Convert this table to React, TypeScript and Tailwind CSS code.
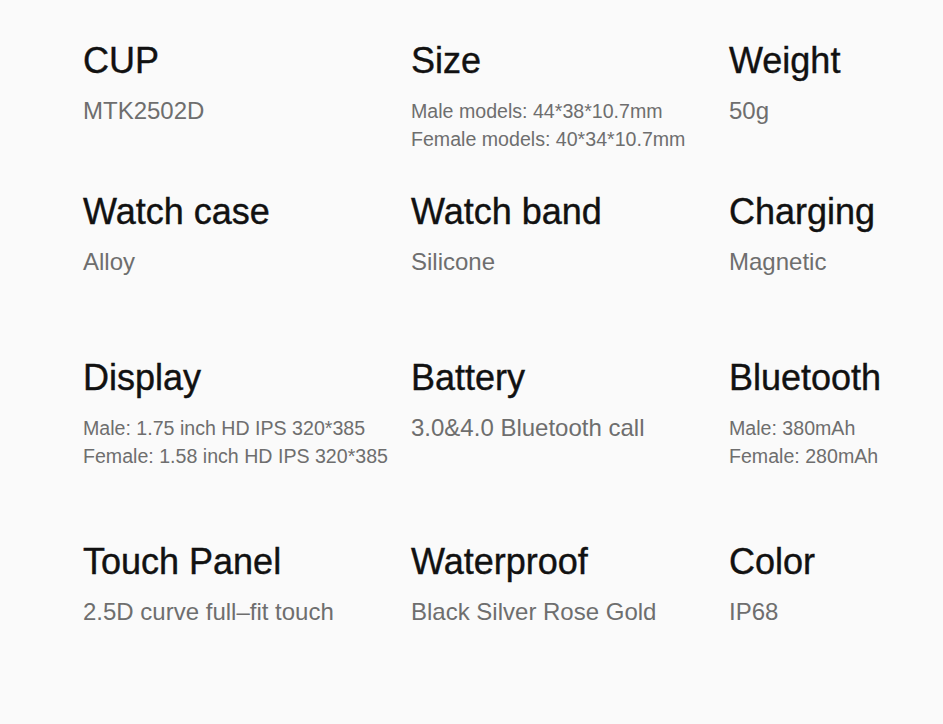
import React from "react";

type Cell = { title: string; lines: string[]; small?: boolean };

const rows: Cell[][] = [
  [
    { title: "CUP", lines: ["MTK2502D"] },
    { title: "Size", lines: ["Male models: 44*38*10.7mm", "Female models: 40*34*10.7mm"], small: true },
    { title: "Weight", lines: ["50g"] },
  ],
  [
    { title: "Watch case", lines: ["Alloy"] },
    { title: "Watch band", lines: ["Silicone"] },
    { title: "Charging", lines: ["Magnetic"] },
  ],
  [
    { title: "Display", lines: ["Male: 1.75 inch HD IPS 320*385", "Female: 1.58 inch HD IPS 320*385"], small: true },
    { title: "Battery", lines: ["3.0&4.0 Bluetooth call"] },
    { title: "Bluetooth", lines: ["Male: 380mAh", "Female: 280mAh"], small: true },
  ],
  [
    { title: "Touch Panel", lines: ["2.5D curve full–fit touch"] },
    { title: "Waterproof", lines: ["Black Silver Rose Gold"] },
    { title: "Color", lines: ["IP68"] },
  ],
];

function SpecCell({ cell }: { cell: Cell }) {
  return (
    <div className="flex flex-col">
      <div className="text-[36px] leading-[40px] text-[#111111] whitespace-nowrap [-webkit-text-stroke:0.4px_#111111]">
        {cell.title}
      </div>
      <div className="mt-[16px] flex flex-col">
        {cell.lines.map((l) => (
          <div
            key={l}
            className={
              cell.small
                ? "text-[19.6px] leading-[28px] text-[#6e6e6e] whitespace-nowrap"
                : "text-[24px] leading-[28px] text-[#6e6e6e] whitespace-nowrap"
            }
          >
            {l}
          </div>
        ))}
      </div>
    </div>
  );
}

export default function App() {
  return (
    <div
      className="w-[943px] h-[724px] bg-[#fafafa] pl-[83px] pt-[41px] overflow-hidden"
      style={{ fontFamily: '"Liberation Sans", Arial, sans-serif' }}
    >
      <div className="grid grid-cols-[328px_318px_1fr] grid-rows-[151px_166px_184px_auto]">
        {rows.map((row, i) =>
          row.map((cell, j) => <SpecCell key={`${i}-${j}`} cell={cell} />)
        )}
      </div>
    </div>
  );
}
